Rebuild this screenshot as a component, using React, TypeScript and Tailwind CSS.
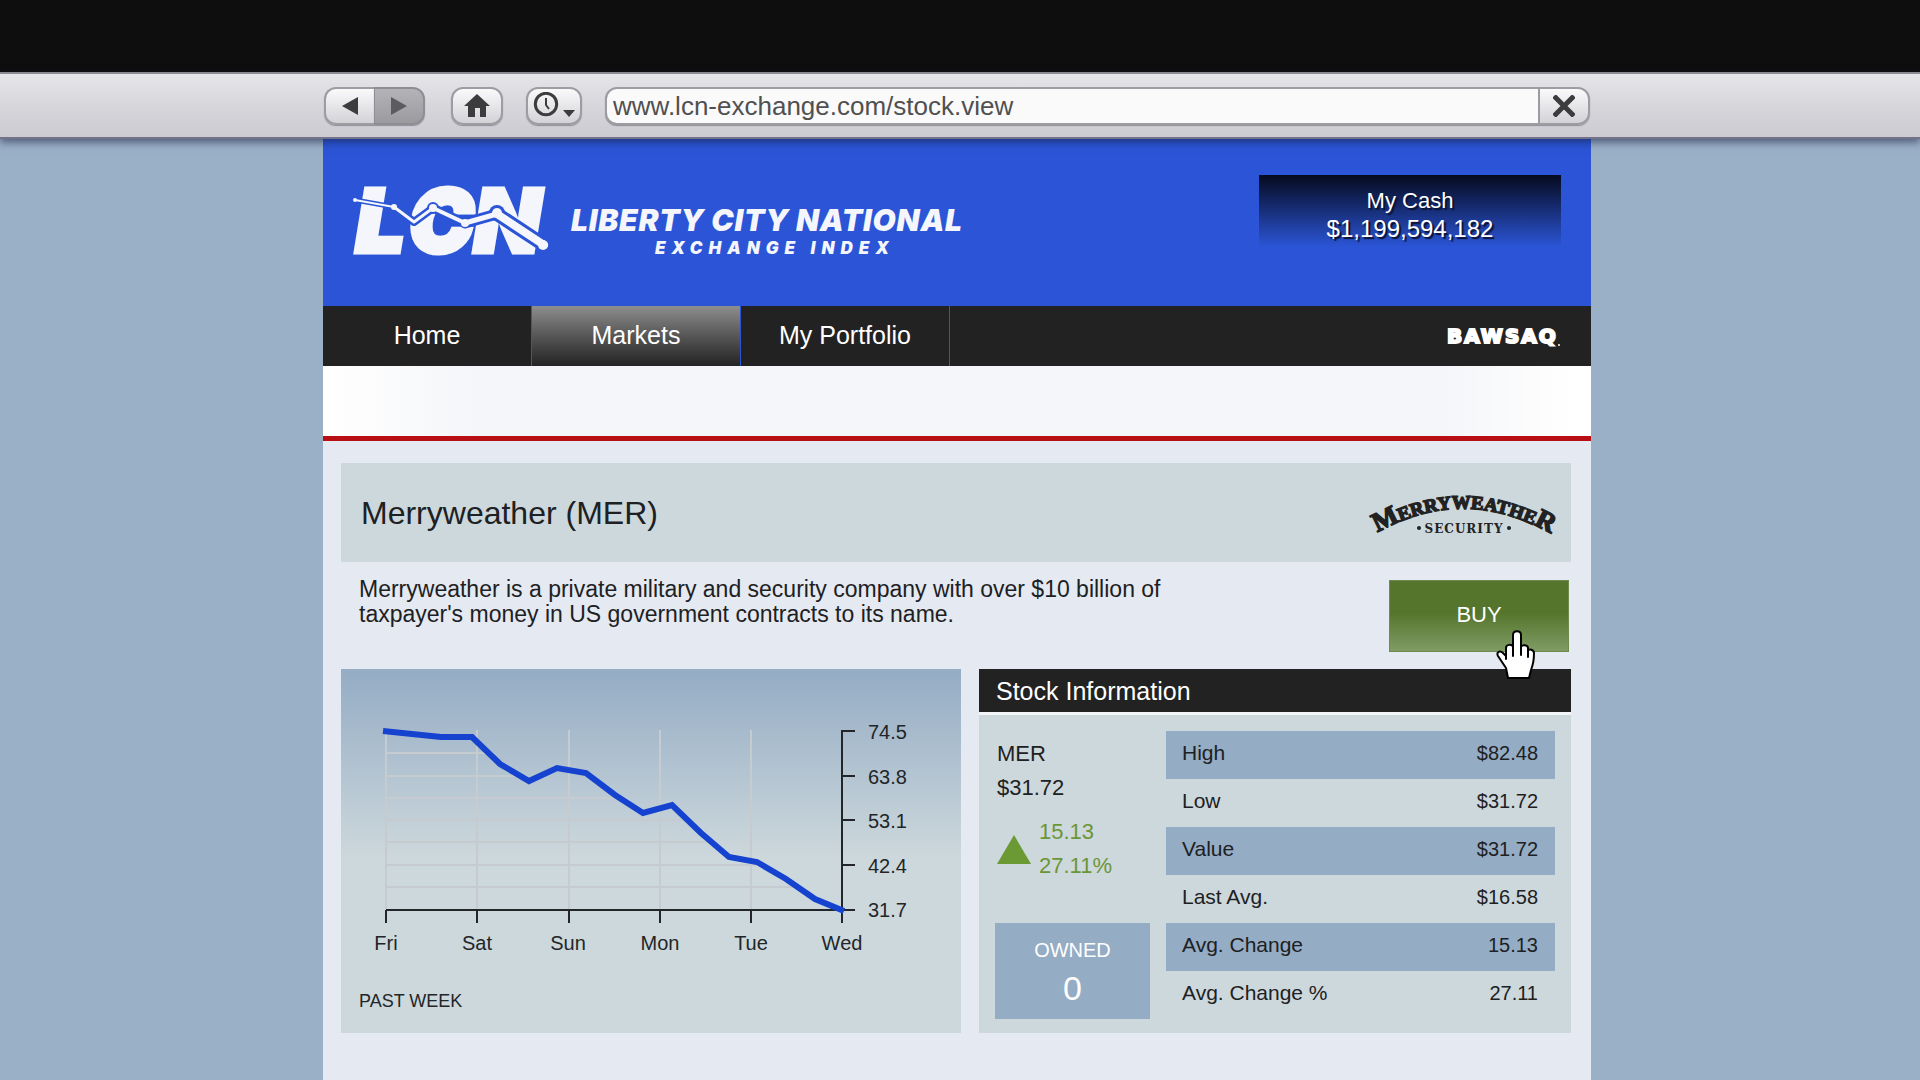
import type { ReactNode } from 'react';

const NAV_ITEMS = ['Home', 'Markets', 'My Portfolio'];

const DETAILS = [
  { label: 'High', value: '$82.48' },
  { label: 'Low', value: '$31.72' },
  { label: 'Value', value: '$31.72' },
  { label: 'Last Avg.', value: '$16.58' },
  { label: 'Avg. Change', value: '15.13' },
  { label: 'Avg. Change %', value: '27.11' },
];

const DAYS = ['Fri', 'Sat', 'Sun', 'Mon', 'Tue', 'Wed'];
const PRICES = ['74.5', '63.8', '53.1', '42.4', '31.7'];

// y position of each minor grid line and where it meets the price line
const GRID_ROWS = [
  [84, 147],
  [107, 178],
  [129, 276],
  [151, 346],
  [173, 370],
  [196, 421],
  [218, 456],
];

const PRICE_LINE =
  '42,62 100,68 131,68 159,95 188,112 216,99 245,104 274,126 302,144 331,136 360,164 388,188 416,193 445,210 474,230 503,242';

function ToolButton({ label, className, children }: { label: string; className: string; children: ReactNode }) {
  return (
    <button
      aria-label={label}
      className={`flex h-[38px] items-center justify-center border-2 border-[#9d9ca3] bg-linear-to-b from-[#fafafb] to-[#d3d2d7] shadow-[0_1px_1px_#8f8e96] ${className}`}
    >
      {children}
    </button>
  );
}

function BrowserBar() {
  return (
    <div className="relative z-10 flex h-[67px] items-center border-t-2 border-b-2 border-t-[#8b8991] border-b-[#73728a] bg-linear-to-b from-[#e6e5ea] via-[#d7d6db] to-[#cccbd1] pl-[324px] pr-[330px] shadow-[0_3px_8px_rgba(20,30,60,0.6)]">
      <ToolButton label="Back" className="w-[50px] rounded-l-xl border-r-0">
        <svg width="16" height="18" viewBox="0 0 16 18" fill="#3c3c3e">
          <path d="M16 0v18L0 9z" />
        </svg>
      </ToolButton>
      <button
        aria-label="Forward"
        className="flex h-[38px] w-[51px] items-center justify-center rounded-r-xl border-2 border-l-1 border-[#8f8e94] bg-linear-to-b from-[#b4b3b8] to-[#9b9a9f] shadow-[0_1px_1px_#8f8e96]"
      >
        <svg width="16" height="18" viewBox="0 0 16 18" fill="#5c5c60">
          <path d="M0 0v18l16-9z" />
        </svg>
      </button>
      <ToolButton label="Home" className="ml-[26px] w-[52px] rounded-xl">
        <svg width="26" height="23" viewBox="0 0 26 23" fill="#3c3c3e">
          <path d="M13 0l13 12h-4v11h-6v-9h-5v9H4V12H0z" />
        </svg>
      </ToolButton>
      <ToolButton label="History" className="ml-[23px] w-[56px] rounded-xl">
        <svg width="46" height="28" viewBox="0 0 46 28">
          <circle cx="15" cy="12" r="10.7" fill="none" stroke="#3c3c3e" strokeWidth="3" />
          <path d="M15 6v7l3 4" fill="none" stroke="#3c3c3e" strokeWidth="2" />
          <path d="M32 18h12l-6 7z" fill="#3c3c3e" />
        </svg>
      </ToolButton>
      <div className="ml-[23px] flex min-w-0 flex-1">
        <input
          aria-label="Address"
          defaultValue="www.lcn-exchange.com/stock.view"
          className="h-[38px] min-w-0 flex-1 rounded-l-xl border-2 border-[#9d9ca3] bg-[#fafafa] pt-0.5 pl-1.5 text-[26px] text-[#505050] shadow-[0_1px_1px_#8f8e96] outline-none"
        />
        <ToolButton label="Stop" className="w-[50px] rounded-r-xl border-l-0">
          <svg width="22" height="22" viewBox="0 0 22 22">
            <path d="M1 1l20 20M21 1L1 21" stroke="#3c3c3e" strokeWidth="5" />
          </svg>
        </ToolButton>
      </div>
    </div>
  );
}

function LcnMark() {
  return (
    <svg width="205" height="84" viewBox="0 0 205 84" className="overflow-visible" role="img" aria-label="LCN">
      <g
        fill="#f4f6fc"
        stroke="#f4f6fc"
        strokeWidth="5"
        fontFamily="Inter, 'Liberation Sans', sans-serif"
        fontWeight="900"
        fontStyle="italic"
        fontSize="86"
      >
        <text x="6" y="72">L</text>
        <text x="59" y="72">C</text>
        <text x="124" y="72">N</text>
      </g>
      <g fill="none" stroke="#2b55d6" strokeLinejoin="round" strokeLinecap="round">
        <path d="M5 20l39 7" strokeWidth="5" />
        <path d="M44 27l20 15 19-14" strokeWidth="8" />
        <path d="M83 28l32 15" strokeWidth="9" />
        <path d="M115 43l32-9" strokeWidth="11" />
        <path d="M147 34l47 31" strokeWidth="14" />
      </g>
      <circle cx="83" cy="28" r="6" fill="#2b55d6" />
      <circle cx="147" cy="33" r="8" fill="#2b55d6" />
      <g fill="none" stroke="#f4f6fc" strokeLinejoin="round" strokeLinecap="round">
        <path d="M5 20l39 7" strokeWidth="2" />
        <path d="M44 27l20 15 19-14" strokeWidth="3" />
        <path d="M83 28l32 15" strokeWidth="4" />
        <path d="M115 43l32-9" strokeWidth="5" />
        <path d="M147 34l47 31" strokeWidth="8" />
      </g>
      <g fill="#f4f6fc">
        <circle cx="5" cy="20" r="2" />
        <circle cx="44" cy="27" r="3" />
        <circle cx="83" cy="28" r="4" />
        <circle cx="115" cy="43" r="4" />
        <circle cx="147" cy="33" r="5" />
        <circle cx="193" cy="65" r="5" />
      </g>
    </svg>
  );
}

function Header() {
  return (
    <header className="flex h-[167px] items-start justify-between bg-[#2b55d6] pl-[27px] pr-[30px]">
      <div className="flex pt-[41px] text-[#f4f6fc]">
        <LcnMark />
        <div className="flex flex-col items-center pt-6 pl-4 font-['Inter',sans-serif] font-black italic whitespace-nowrap">
          <span className="text-[30px] leading-8 tracking-wide">LIBERTY CITY NATIONAL</span>
          <span className="pl-4 text-[17px] leading-6 tracking-[6px]">EXCHANGE INDEX</span>
        </div>
      </div>
      <div className="mt-9 flex h-[72px] w-[302px] flex-col items-center bg-linear-to-b from-[#050a1e] to-transparent pt-3 text-white [text-shadow:2px_2px_1px_#0a1230]">
        <span className="text-[22px] leading-7">My Cash</span>
        <span className="text-2xl leading-7">$1,199,594,182</span>
      </div>
    </header>
  );
}

function NavBar() {
  return (
    <nav className="flex h-[60px] items-center justify-between bg-[#222222] pr-[30px]">
      <div className="flex h-full">
        {NAV_ITEMS.map(item => (
          <a
            key={item}
            href="#"
            className={`flex w-[209px] items-center justify-center border-r border-[#2b55d6] text-[25px] text-white ${
              item === 'Markets' ? 'bg-linear-to-b from-[#8e8e8e] to-[#242424]' : ''
            }`}
          >
            {item}
          </a>
        ))}
      </div>
      <a href="#" aria-label="BAWSAQ">
        <svg width="116" height="24" viewBox="0 0 116 24" className="overflow-visible" fill="#ffffff">
          <text
            x="2"
            y="19"
            stroke="#ffffff"
            strokeWidth="2"
            fontFamily="'DejaVu Sans', sans-serif"
            fontWeight="700"
            fontSize="20"
            letterSpacing="2"
          >
            BAWSAQ
          </text>
          <circle cx="114" cy="21" r="1" />
        </svg>
      </a>
    </nav>
  );
}

function MerryweatherLogo() {
  return (
    <svg
      width="182"
      height="52"
      viewBox="0 0 182 52"
      className="overflow-visible"
      fill="#222222"
      role="img"
      aria-label="Merryweather Security"
    >
      <path id="arch" d="M3 47Q91 -4 181 48" fill="none" />
      <text stroke="#222222" strokeWidth="1.5" fontFamily="'Liberation Serif', serif" fontWeight="700" fontSize="19">
        <textPath href="#arch" startOffset="50%" textAnchor="middle">
          <tspan fontSize="27">M</tspan>ERRYWEATHE<tspan fontSize="27">R</tspan>
        </textPath>
      </text>
      <text
        x="92"
        y="46"
        textAnchor="middle"
        fontFamily="'DejaVu Serif', serif"
        fontWeight="700"
        fontSize="12"
        letterSpacing="1"
      >
        SECURITY
      </text>
      <circle cx="47" cy="41" r="2" />
      <circle cx="137" cy="41" r="2" />
    </svg>
  );
}

function HandCursor() {
  return (
    <svg
      width="40"
      height="50"
      viewBox="0 0 40 50"
      className="pointer-events-none absolute top-[50px] left-[107px]"
      fill="#ffffff"
      stroke="#000000"
      strokeWidth="2"
      strokeLinejoin="round"
      strokeLinecap="round"
    >
      <path d="M12 48L10 38 2 26c-2-4 2-6 5-3l3 3v-8c0-4 6-4 7-1V5c0-5 8-5 8 0v12c1-3 7-2 7 1v3c1-3 6-1 6 2 0 6-1 12-3 17l-2 8z" />
      <path d="M10 25v4M17 17v9M25 16v9M32 20v7" fill="none" />
    </svg>
  );
}

function PriceChart() {
  return (
    <section className="flex flex-col bg-linear-to-b from-[#94acc4] to-[#cdd8dc] to-52%">
      <svg viewBox="0 0 620 300" className="w-full" role="img" aria-label="Price over the past week">
        <g stroke="#c6cbcf" strokeWidth="2">
          {[45, 136, 228, 319, 410].map(x => (
            <path key={x} d={`M${x} 61V240`} />
          ))}
          {GRID_ROWS.map(([y, end]) => (
            <path key={y} d={`M45 ${y}H${end}`} />
          ))}
        </g>
        <g stroke="#222628" strokeWidth="2" fill="none">
          <path d="M45 241H514M514 62H501V254" />
          {[45, 136, 228, 319, 410].map(x => (
            <path key={x} d={`M${x} 241V254`} />
          ))}
          {[107, 151, 196].map(y => (
            <path key={y} d={`M501 ${y}H514`} />
          ))}
        </g>
        <polyline points={PRICE_LINE} fill="none" stroke="#1543cf" strokeWidth="6" />
        <g fill="#222628" fontSize="20">
          {PRICES.map((price, i) => (
            <text key={price} x="527" y={70 + Math.round(i * 44.5)}>
              {price}
            </text>
          ))}
          {DAYS.map((day, i) => (
            <text key={day} x={45 + Math.round(i * 91.2)} y="281" textAnchor="middle">
              {day}
            </text>
          ))}
        </g>
      </svg>
      <p className="pt-5 pb-5 pl-[18px] text-lg leading-6 text-[#222628]">PAST WEEK</p>
    </section>
  );
}

function StockInformation() {
  return (
    <section className="flex flex-col bg-[#cdd8dc] text-[#1d2123]">
      <h2 className="h-[46px] border-b-3 border-[#f3f5f9] bg-[#222222] pl-[17px] text-[25px] leading-[44px] text-white">
        Stock Information
      </h2>
      <div className="flex gap-4 px-4 pt-4 pb-[14px]">
        <div className="flex w-[155px] flex-col justify-between pt-1.5">
          <div className="pl-0.5 text-[22px] leading-[34px]">
            <p>MER</p>
            <p>$31.72</p>
            <div className="mt-2.5 flex items-center gap-2 text-[#6b9636]">
              <svg width="34" height="29" viewBox="0 0 34 29" fill="#6b9a35">
                <path d="M17 0l17 29H0z" />
              </svg>
              <div>
                <p>15.13</p>
                <p>27.11%</p>
              </div>
            </div>
          </div>
          <div className="flex h-24 flex-col items-center bg-[#94acc4] pt-[11px] text-white">
            <span className="text-xl leading-8">OWNED</span>
            <span className="text-[34px] leading-[44px]">0</span>
          </div>
        </div>
        <table className="flex-1 text-[21px]">
          <tbody>
            {DETAILS.map(({ label, value }) => (
              <tr key={label} className="h-12 odd:bg-[#94acc4]">
                <th scope="row" className="pb-1 pl-4 text-left font-normal">
                  {label}
                </th>
                <td className="pr-[17px] pb-1 text-right text-xl">{value}</td>
              </tr>
            ))}
          </tbody>
        </table>
      </div>
    </section>
  );
}

function App() {
  return (
    <div className="flex min-h-screen flex-col bg-[#9ab0c7] font-['Liberation_Sans',sans-serif]">
      <div className="h-[72px] bg-[#0e0e0e]" />
      <BrowserBar />
      <div className="mr-[329px] ml-[323px] flex flex-1 flex-col bg-[#e5e9f1]">
        <Header />
        <NavBar />
        <div className="h-[75px] border-b-5 border-[#b80f14] bg-linear-to-r from-white via-[#f5f6f9] via-12% to-[#f5f6f9]">
          <div className="ml-auto h-full w-[12%] bg-linear-to-r from-transparent to-white to-90%" />
        </div>
        <main className="pt-[22px] pr-5 pl-[18px] text-[#1d2123]">
          <div className="flex h-[99px] items-center justify-between bg-[#cdd8dc] pr-[17px] pl-5">
            <h1 className="text-[32px]">Merryweather (MER)</h1>
            <MerryweatherLogo />
          </div>
          <div className="flex min-h-[107px] items-center justify-between pr-0.5 pl-[18px]">
            <p className="max-w-[860px] self-start pt-[15px] text-[23px] leading-[25px]">
              Merryweather is a private military and security company with over $10 billion of taxpayer's money in US
              government contracts to its name.
            </p>
            <div className="relative z-10">
              <button className="h-[72px] w-[180px] border border-[#6d8c4c] bg-linear-to-b from-[#54752b] from-45% to-[#809c64] pb-0.5 text-[22px] text-white">
                BUY
              </button>
              <HandCursor />
            </div>
          </div>
          <div className="grid grid-cols-[620fr_592fr] items-stretch gap-[18px]">
            <PriceChart />
            <StockInformation />
          </div>
        </main>
      </div>
    </div>
  );
}

export default App;
